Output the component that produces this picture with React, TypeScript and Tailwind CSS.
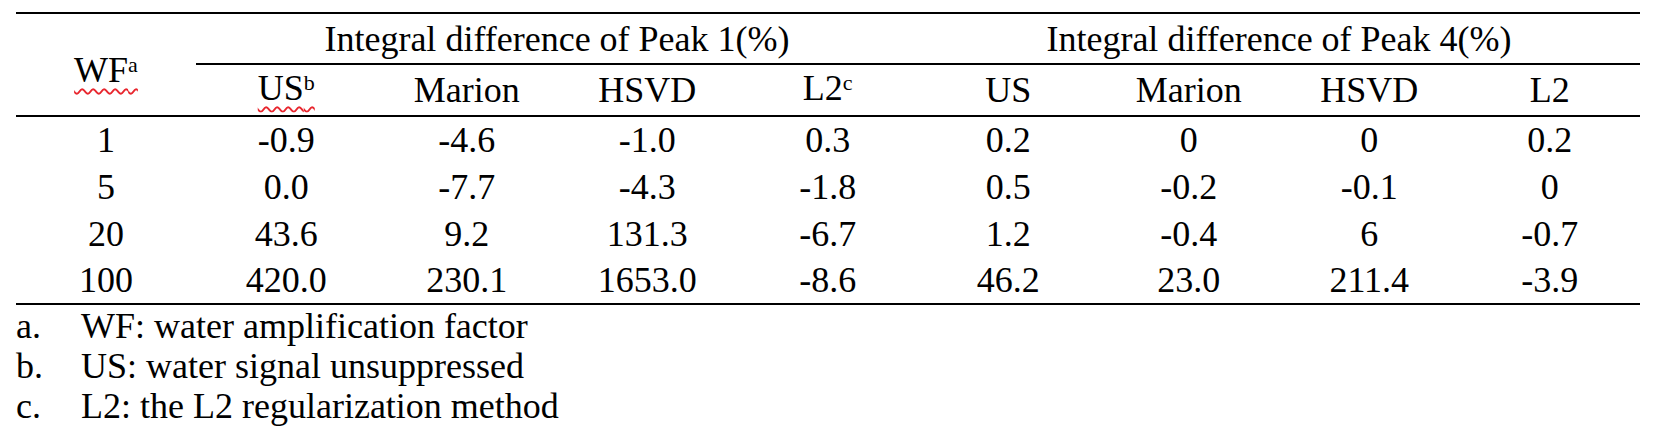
const METHODS = ["US", "Marion", "HSVD", "L2"];

const ROWS: { wf: string; peak1: string[]; peak4: string[] }[] = [
  { wf: "1", peak1: ["-0.9", "-4.6", "-1.0", "0.3"], peak4: ["0.2", "0", "0", "0.2"] },
  { wf: "5", peak1: ["0.0", "-7.7", "-4.3", "-1.8"], peak4: ["0.5", "-0.2", "-0.1", "0"] },
  { wf: "20", peak1: ["43.6", "9.2", "131.3", "-6.7"], peak4: ["1.2", "-0.4", "6", "-0.7"] },
  { wf: "100", peak1: ["420.0", "230.1", "1653.0", "-8.6"], peak4: ["46.2", "23.0", "211.4", "-3.9"] },
];

const NOTES = [
  { mark: "a.", text: "WF: water amplification factor" },
  { mark: "b.", text: "US: water signal unsuppressed" },
  { mark: "c.", text: "L2: the L2 regularization method" },
];

function Sup({ children }: { children: string }) {
  return <span className="relative -top-[10px] text-[22px]">{children}</span>;
}

// red spell-check squiggle under a word
function Flagged({ children }: { children: React.ReactNode }) {
  return (
    <span className="underline decoration-wavy decoration-[#e8262e] decoration-[1.5px] underline-offset-[6px]">
      {children}
    </span>
  );
}

export default function App() {
  return (
    <div className="h-[436px] w-[1658px] overflow-hidden bg-white pl-4 pt-3 font-['Liberation_Serif',serif] text-[36px] leading-[40px] text-black">
      <table className="w-[1624px] table-fixed border-collapse border-t-2 border-black">
        <colgroup>
          <col className="w-[180px]" />
          {Array.from({ length: 8 }).map((_, i) => (
            <col key={i} />
          ))}
        </colgroup>
        <thead>
          <tr className="h-[51px]">
            <th rowSpan={2} className="border-b-2 border-black pt-[16px] text-center font-normal">
              <Flagged>
                WF<Sup>a</Sup>
              </Flagged>
            </th>
            <th colSpan={4} className="border-b-2 border-black text-center font-normal">
              Integral difference of Peak 1(%)
            </th>
            <th colSpan={4} className="border-b-2 border-black text-center font-normal">
              Integral difference of Peak 4(%)
            </th>
          </tr>
          <tr className="h-[52px]">
            {[...METHODS, ...METHODS].map((m, i) => (
              <th key={i} className="border-b-2 border-black text-center font-normal">
                {i === 0 ? (
                  <Flagged>
                    US<Sup>b</Sup>
                  </Flagged>
                ) : i === 3 ? (
                  <>
                    L2<Sup>c</Sup>
                  </>
                ) : (
                  m
                )}
              </th>
            ))}
          </tr>
        </thead>
        <tbody>
          {ROWS.map((r, i) => (
            <tr
              key={r.wf}
              className={i === ROWS.length - 1 ? "h-[47px] border-b-2 border-black" : "h-[47px]"}
            >
              <td className="text-center">{r.wf}</td>
              {[...r.peak1, ...r.peak4].map((v, j) => (
                <td key={j} className="text-center">
                  {v}
                </td>
              ))}
            </tr>
          ))}
        </tbody>
      </table>
      <div className="mt-[1px]">
        {NOTES.map((n) => (
          <div key={n.mark} className="flex">
            <span className="w-[65px] shrink-0">{n.mark}</span>
            <span>{n.text}</span>
          </div>
        ))}
      </div>
    </div>
  );
}
